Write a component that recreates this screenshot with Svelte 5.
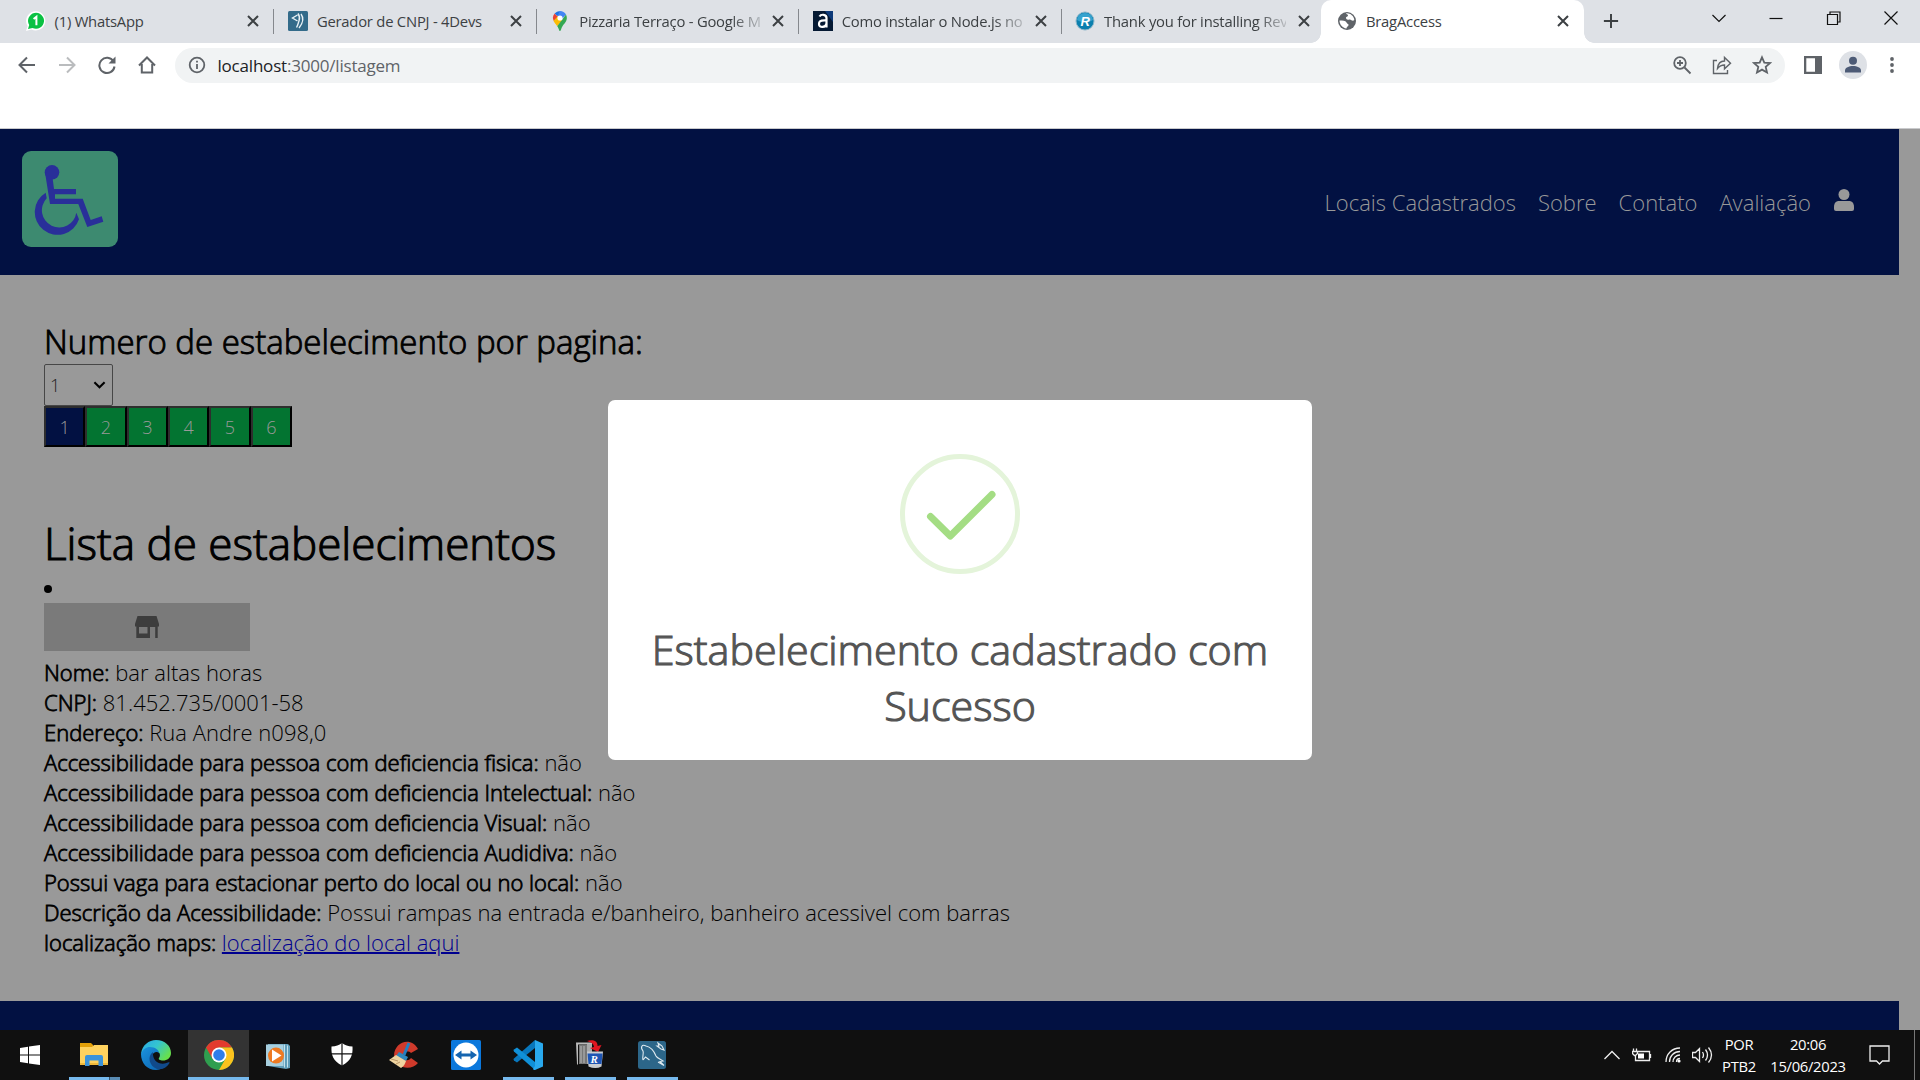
<script>
  const tabs = [
    { icon: 'whatsapp', title: '(1) WhatsApp' },
    { icon: 'devs', title: 'Gerador de CNPJ - 4Devs' },
    { icon: 'maps', title: 'Pizzaria Terraço - Google M', fade: true },
    { icon: 'alura', title: 'Como instalar o Node.js no', fade: true },
    { icon: 'revo', title: 'Thank you for installing Rev', fade: true },
    { icon: 'globe', title: 'BragAccess', active: true }
  ];
  const links = ['Locais Cadastrados', 'Sobre', 'Contato', 'Avaliação'];
  const pages = [1, 2, 3, 4, 5, 6];
  const details = [
    ['Nome:', 'bar altas horas'],
    ['CNPJ:', '81.452.735/0001-58'],
    ['Endereço:', 'Rua Andre n098,0'],
    ['Accessibilidade para pessoa com deficiencia fisica:', 'não'],
    ['Accessibilidade para pessoa com deficiencia Intelectual:', 'não'],
    ['Accessibilidade para pessoa com deficiencia Visual:', 'não'],
    ['Accessibilidade para pessoa com deficiencia Audidiva:', 'não'],
    ['Possui vaga para estacionar perto do local ou no local:', 'não'],
    ['Descrição da Acessibilidade:', 'Possui rampas na entrada e/banheiro, banheiro acessivel com barras']
  ];
  const apps = [
    { id: 'explorer', state: 'stacked' },
    { id: 'edge' },
    { id: 'chrome', state: 'current' },
    { id: 'media' },
    { id: 'shield' },
    { id: 'ccleaner' },
    { id: 'teamviewer' },
    { id: 'vscode', state: 'open' },
    { id: 'revo', state: 'open' },
    { id: 'mysql', state: 'open' }
  ];
</script>

<div class="screen">
  <header class="tabstrip">
    {#each tabs as tab}
      <div class="tab" class:active={tab.active}>
        <svg class="favicon" viewBox="0 0 20 20">
          {#if tab.icon === 'whatsapp'}
            <path d="M0 20l1.6-5A9.6 9.6 0 1 1 5.5 18.500z" fill="#fff" />
            <path d="M2 18l1.200-4A8 8 0 1 1 6.500 17z" fill="#0ac143" />
            <path d="M7.600 8l2.800-2.200v8.400" fill="none" stroke="#fff" stroke-width="2" />
          {:else if tab.icon === 'devs'}
            <rect width="20" height="20" rx="1.500" fill="#336b8a" />
            <path d="M9.500 4L4.500 7l5 3M10 2.500c2 3 2 5 1 7.500s-1 4-2.500 6.500M13 3c3 4 2 9-2 14" fill="none" stroke="#e8f1f5" stroke-width="1.400" />
          {:else if tab.icon === 'maps'}
            <path d="M4.600 2.500A7 7 0 0 0 4 10.500l4-4.700z" fill="#ea4335" />
            <path d="M10 0a7 7 0 0 1 6 3.500L12 8 7 4z" fill="#4285f4" />
            <path d="M10 0a7 7 0 0 0-5.400 2.500L7.600 5z" fill="#1a73e8" />
            <path d="M3.600 9.800c.8 2 2.200 3.400 3.600 5.400L12.500 9 8 5z" fill="#fbbc04" />
            <path d="M16 3.500c2.600 5.500-1.300 8.500-3.400 11.500C11 17.500 11 20 10 20s-1-2.500-2.800-4.800z" fill="#34a853" />
            <circle cx="10" cy="7" r="2.600" fill="#fff" />
          {:else if tab.icon === 'alura'}
            <rect width="20" height="20" fill="#051933" />
            <path d="M12 0h8v11z" fill="#0d3a7a" />
            <path d="M6.500 5.500C8 3 13.500 3 13.500 7v9.500M13.500 9.500C6 9 6 11 6 13c0 4.500 7 3.500 7.500-.5" fill="none" stroke="#fff" stroke-width="2.200" />
          {:else if tab.icon === 'revo'}
            <circle cx="10" cy="10" r="9" fill="#0b7fae" stroke="#8bb5c9" />
            <path d="M2 9a8 7 0 0 1 16 0c-5 3-11 3-16 0z" fill="#35a2ce" />
            <text x="5.500" y="14.600" class="r-mark">R</text>
          {:else}
            <circle cx="10" cy="10" r="9" fill="#5f6368" />
            <path d="M9 2.500C12 1.500 17 4.500 17.300 9c-2 2-3-1-5-.5s-3 0-3.300-1.500 2-1 2-2.500S9 3.500 9 2.500zM2.500 9.500c3 0 6 0 7 2s2 1 2 2.500-2 1.500-2 3.500c-4-.5-7-4-7-8z" fill="#fff" />
          {/if}
        </svg>
        <span class="tab-title" class:fade={tab.fade}>{tab.title}</span>
        <svg class="tab-close" viewBox="0 0 16 16"><path d="M3 3l10 10M13 3L3 13" /></svg>
      </div>
    {/each}
    <svg class="new-tab" viewBox="0 0 18 18"><path d="M9 1v16M1 9h16" /></svg>
    <div class="window-buttons">
      <svg viewBox="0 0 16 16"><path d="M1.500 5L8 11.500 14.500 5" /></svg>
      <svg viewBox="0 0 16 16"><path d="M1.500 8.500h13" /></svg>
      <svg viewBox="0 0 16 16"><path d="M1.500 4.500h10v10h-10zM4 4.500v-2.500h10v10h-2.500" /></svg>
      <svg viewBox="0 0 16 16"><path d="M1.500 1.500l13 13M14.500 1.500l-13 13" /></svg>
    </div>
  </header>

  <div class="toolbar">
    <svg class="tool" viewBox="0 0 20 20"><path d="M18 10H3M10 2.500L2.500 10l7.500 7.500" /></svg>
    <svg class="tool faded" viewBox="0 0 20 20"><path d="M2 10h15M10 2.500l7.500 7.500-7.500 7.500" /></svg>
    <svg class="tool" viewBox="0 0 20 20"><path d="M16.500 6.500A7.600 7.600 0 1 0 17.500 11.500" /><path d="M18.500 1.500v7h-7z" class="solid" /></svg>
    <svg class="tool" viewBox="0 0 20 20"><path d="M2 10.500l8-8 8 8M4.800 9v8.500h10.400V9" /></svg>
    <div class="address">
      <svg class="info" viewBox="0 0 18 18"><circle cx="9" cy="9" r="7.300" /><path d="M9 8v5M9 4.800v1.700" /></svg>
      <span class="url"><b>localhost</b>:3000/listagem</span>
      <div class="address-actions">
        <svg viewBox="0 0 20 20"><circle cx="8" cy="8" r="5.800" /><path d="M12.500 12.500l6 6M8 5v6M5 8h6" /></svg>
        <svg viewBox="0 0 20 20" class="fine"><path d="M5 5.500H1.500v13h14V15M5.500 13.500c.5-5 3.500-7.500 7-7.500V2.500l6 5.700-6 5.600V10c-3 0-5 1-7 3.500z" /></svg>
        <svg viewBox="0 0 20 20"><path d="M10 2.300l2.300 5.300 5.700.5-4.300 3.800 1.300 5.600L10 14.600l-5 2.900 1.300-5.600L2 8.100l5.700-.5z" /></svg>
      </div>
    </div>
    <svg class="side-panel" viewBox="0 0 18 18"><path d="M0 0h18v18H0zM2.300 2.300v13.400h8.700V2.300z" fill-rule="evenodd" /></svg>
    <svg class="profile" viewBox="0 0 28 28"><circle cx="14" cy="14" r="14" fill="#dee1e6" /><circle cx="14" cy="9.800" r="4" fill="#4d5b76" /><path d="M6 21.500v-2c0-3 4-4.500 8-4.500s8 1.500 8 4.500v2z" fill="#4d5b76" /></svg>
    <svg class="dots" viewBox="0 0 4 18"><circle cx="2" cy="3" r="1.900" /><circle cx="2" cy="9" r="1.900" /><circle cx="2" cy="15" r="1.900" /></svg>
  </div>

  <div class="viewport">
    <nav class="navbar">
      <svg class="logo" viewBox="0 0 96 96">
        <rect width="96" height="96" rx="9" fill="#3d8a70" />
        <g fill="#292f99">
          <circle cx="30" cy="21.300" r="7.300" />
          <path d="M22.900 20.700L28 53h28.300l9 23 16-5.300-1.600-5.400-11 3.700-8-21.300H33v-4.400h21V38H32l-1.300-10z" />
          <path d="M23.700 41.700A22.700 22.700 0 1 0 57 68.300l-2.700-6.600A17.300 17.300 0 1 1 24.700 47.200z" />
        </g>
      </svg>
      <div class="links">
        {#each links as link}<span>{link}</span>{/each}
        <svg class="user" viewBox="0 0 20 22"><circle cx="10" cy="5.500" r="5.500" /><path d="M0 18c0-4 2-6 5-6h10c3 0 5 2 5 6v2q0 2-2 2H2q-2 0-2-2z" /></svg>
      </div>
    </nav>

    <main>
      <h2>Numero de estabelecimento por pagina:</h2>
      <div class="select"><span>1</span><svg viewBox="0 0 14 10"><path d="M1.500 2L7 7.500 12.500 2" /></svg></div>
      <div class="pages">
        {#each pages as page}<div class="page" class:chosen={page === 1}>{page}</div>{/each}
      </div>
      <h1>Lista de estabelecimentos</h1>
      <div class="bullet"></div>
      <div class="store">
        <svg viewBox="0 0 24 22"><path d="M2.500 0h19l2.500 8v2.500h-1.300V22h-2.500V11H15v11H1.300V10.500H0V8zM4 11v6.500h8.500V11z" fill-rule="evenodd" /></svg>
      </div>
      <div class="details">
        {#each details as [label, value]}
          <p><strong>{label}</strong> {value}</p>
        {/each}
        <p><strong>localização maps:</strong> <u>localização do local aqui</u></p>
      </div>
    </main>
    <div class="page-footer"></div>

    <section class="modal">
      <svg class="success" viewBox="0 0 120 120">
        <circle cx="60" cy="60" r="57.500" fill="none" stroke="#e4f4da" stroke-width="5" />
        <path d="M30.500 62.500L50.300 82 92 40.500" fill="none" stroke="#a4dd84" stroke-width="7" stroke-linecap="round" stroke-linejoin="round" />
      </svg>
      <div class="message">Estabelecimento cadastrado com<br />Sucesso</div>
    </section>
  </div>

  <footer class="taskbar">
    <div class="start"><svg viewBox="0 0 20 20"><path d="M0 3l8-1.200v7.700H0zM9 1.600L20 0v9.500H9zM0 10.500h8v7.700L0 17zM9 10.500h11V20L9 18.400z" fill="#fff" /></svg></div>
    {#each apps as app}
      <div class="app {app.state ?? ''}">
        <svg viewBox="0 0 30 30">
          {#if app.id === 'explorer'}
            <path d="M1 3h11l2 2v5H1z" fill="#e3a008" />
            <path d="M1 7h12l2-2h14v20H1z" fill="#ffd25e" />
            <path d="M1 23h28v2H1z" fill="#f0b93a" />
            <path d="M6 26V17q0-2 2-2h14q2 0 2 2v9h-4.500v-5.500h-9V26z" fill="#3b93da" />
          {:else if app.id === 'edge'}
            <defs>
              <linearGradient id="edge-top" x1="0" y1="0" x2="1" y2=".6"><stop offset="0" stop-color="#2aa6e8" /><stop offset=".5" stop-color="#34c5d0" /><stop offset="1" stop-color="#67e04c" /></linearGradient>
              <linearGradient id="edge-low" x1="0" y1="0" x2="1" y2="1"><stop offset="0" stop-color="#1b93de" /><stop offset="1" stop-color="#0b61ae" /></linearGradient>
            </defs>
            <path d="M0 14C1 5 8 0 15 0c9 0 15 6 15 13 0 5-4 7.500-8 7.500-3 0-5-1-4-2.500 2-2.500 1-7-4-7C9 11 5 10 0 14z" fill="url(#edge-top)" />
            <path d="M0 14c2-5 5-7 9-7 5 0 9 3 9 6-2-2-6-1-7 3-1 7 5 13 12 11.800C20 29 18 30 15 30 6 30 0 23 0 14z" fill="url(#edge-low)" />
            <path d="M12 12c-6 4-4 14 4 17 6 1 10-2 12.500-6 .3-.8-.4-1-1-.7C20 26 11 22 12 12z" fill="#114a8b" />
          {:else if app.id === 'chrome'}
            <circle cx="15" cy="15" r="15" fill="#2f9e4f" />
            <path d="M2 7.500A15 15 0 0 1 28 7.500H15L8.500 18.800z" fill="#e33b2e" />
            <path d="M28 7.500A15 15 0 0 1 15 30l6.500-11.200L15 7.500z" fill="#fcc31e" />
            <circle cx="15" cy="15" r="7.500" fill="#fff" /><circle cx="15" cy="15" r="5.800" fill="#2f7de9" />
          {:else if app.id === 'media'}
            <path d="M3 4h20l2 2v22l-4 1-18-3z" fill="#5f9db9" />
            <path d="M1 4.500h17.500V26H1z" fill="#a7cfdf" /><path d="M19.500 4.500v23M22.500 5.500v22" stroke="#c4e1eb" />
            <circle cx="11" cy="15.600" r="8" fill="#ee7a22" /><path d="M7 9.500l9.500 6-9.500 6z" fill="#fff" />
          {:else if app.id === 'shield'}
            <path d="M15 3c3 2.500 6 3.300 10.500 3.500C26 15 24 21 15 25.500 6 21 4 15 4.500 6.500 9 6.300 12 5.500 15 3z" fill="#fff" />
            <path d="M15 3v23M4 13.800h22" stroke="#111" stroke-width="1.200" />
          {:else if app.id === 'ccleaner'}
            <path d="M29 9L22 13c-3-3-8-1-8 3s5 6 8 2l7 5c-6 8-23 6-24-7C5 2 22-4 29 9z" fill="#cf3a2b" />
            <path d="M20 3L15 15" stroke="#237ec1" stroke-width="3" />
            <path d="M10 12l9 5-2 4-10-5z" fill="#3088bd" /><path d="M7 15l10 6c-1 3-2 5-5 7L0 20z" fill="#efd4a0" /><path d="M2 19l7 2M7 24l4-2" stroke="#b89565" />
          {:else if app.id === 'teamviewer'}
            <rect width="30" height="30" rx="1.500" fill="#0b78dc" /><circle cx="15" cy="15" r="12.500" fill="#fff" />
            <path d="M4 15l6.500-4.500v3h9v-3L26 15l-6.500 4.500v-3h-9v3z" fill="#1565b0" />
          {:else if app.id === 'vscode'}
            <path d="M22 0v8L4 22.500 1 20.500q-1-1 0-2z" fill="#0877bd" />
            <path d="M22 30v-8L4 7.500 1 9.500q-1 1 0 2z" fill="#1090d8" />
            <path d="M22 0l8 3.500v23L22 30q-1 .3-2-1l2-3z" fill="#29a9ee" />
          {:else if app.id === 'revo'}
            <path d="M1 2.500h16v2H3v20H2z" fill="#bbb" /><path d="M4 5h8v19H4z" fill="#777" /><path d="M12 4h5v20h-5z" fill="#aaa" /><path d="M6 6v17M9 6v17" stroke="#bbb" />
            <path d="M12 1c6-2 11 0 10.500 5l4-1L23 12l-8-4 4-1c0-3-3-5-7-6z" fill="#e01520" />
            <path d="M12 11.500h16l-1.500 15q-6 3-13 0z" fill="#c8ccd1" /><path d="M12.500 13.500h15l-1 10.500h-13z" fill="#1e55b4" />
            <text x="15.500" y="23" class="r-app">R</text>
          {:else}
            <rect x="1" y="1" width="28" height="28" rx="2.500" fill="#2c6689" />
            <path d="M6 20C5 16 7 14 6 11 3 7 5 4 9 6c5 1 8 5 10 10 1 2 4 3 7 5l-3 .5 4 4-6-3.500M6 20l2.500-3 4 3M21 3l1 3h-2l4 3 3 1-2-4z" fill="none" stroke="#dfeaf0" stroke-width="1.100" />
          {/if}
        </svg>
      </div>
    {/each}
    <div class="tray">
      <svg class="up" viewBox="0 0 16 10"><path d="M.5 9L8 1.500 15.500 9" /></svg>
      <svg class="battery" viewBox="0 0 20 14"><path d="M5.500 3.500h12v9H3.500v-5M18.500 6v4M1.500.5v3M4.500.5v3M.5 3.500h5v2l-2 2h-1l-2-2z" /><path d="M6 5.500h6v5H6z" class="fill" /></svg>
      <svg class="wifi" viewBox="0 0 16 16"><path d="M1 15C1 7 7 1 15 1M4.500 15C4.500 9 9 4.500 15 4.500M8 15c0-4 3-7 7-7M11.500 15c0-2 1.500-3.500 3.500-3.500" /><circle cx="14" cy="14" r="1.600" class="fill" /></svg>
      <svg class="sound" viewBox="0 0 21 18"><path d="M.5 6.500h3l4-4v13l-4-4h-3zM10.500 6q2 3 0 6M13.500 3.500q4 5.500 0 11M16.500 1.500q6 7.500 0 15" /></svg>
      <div class="stamp lang"><span>POR</span><span>PTB2</span></div>
      <div class="stamp clock"><span>20:06</span><span>15/06/2023</span></div>
      <svg class="notice" viewBox="0 0 21 20"><path d="M1 1h19v15h-6.500l-3 3-3-3H1z" /></svg>
      <div class="peek"></div>
    </div>
  </footer>
</div>

<style>
  :global(body) { margin: 0; overflow: hidden; }
  svg { display: block; flex: none; }
  .screen { width: 1920px; height: 1080px; display: flex; flex-direction: column; overflow: hidden; background: #fff; font-family: 'Open Sans', 'Noto Sans', sans-serif; }

  .tabstrip { height: 43px; flex: none; display: flex; padding-left: 11px; background: #dee1e6; font-size: 14.800px; color: #3c4043; }
  .tab { position: relative; box-sizing: border-box; width: 262.400px; height: 43px; display: flex; align-items: center; padding: 0 12px 2px 14.500px; flex: none; }
  .tab + .tab:not(.active)::before { content: ''; position: absolute; left: 0; top: 9px; width: 1px; height: 25px; background: #85888d; }
  .tab.active { width: 263px; margin-left: -2px; padding-left: 16px; background: #fff; border-radius: 10px 10px 0 0; }
  .tab.active::before, .tab.active::after { content: ''; position: absolute; bottom: 0; width: 10px; height: 10px; }
  .tab.active::before { left: -10px; background: radial-gradient(circle at 0 0, transparent 9.500px, #fff 10px); }
  .tab.active::after { right: -10px; background: radial-gradient(circle at 100% 0, transparent 9.500px, #fff 10px); }
  .favicon { width: 20px; height: 20px; }
  .tab-title { width: 182px; margin-left: 9px; white-space: nowrap; letter-spacing: -.22px; }
  .fade { -webkit-mask-image: linear-gradient(90deg, #000 152px, transparent 190px); mask-image: linear-gradient(90deg, #000 152px, transparent 190px); }
  .tab-close { width: 16px; height: 16px; margin-left: 9.500px; stroke: #3c4043; stroke-width: 2; }
  .active .tab-close { margin-left: 7.500px; }
  .new-tab { width: 16px; height: 16px; margin: 13px 0 0 19px; stroke: #3c4043; stroke-width: 2.200; }
  .window-buttons { display: flex; gap: 41.500px; margin: 10px 21px 0 auto; }
  .window-buttons svg { width: 16px; height: 16px; fill: none; stroke: #111; stroke-width: 1.200; }
  .r-mark { font: italic bold 13px 'Liberation Sans', sans-serif; fill: #fff; }

  .toolbar { height: 45px; padding: 0 26px 0 17px; flex: none; display: flex; align-items: center; box-sizing: border-box; }
  .toolbar > svg { margin-bottom: 1px; }
  .tool { width: 20px; height: 20px; margin-right: 20px; fill: none; stroke: #5f6368; stroke-width: 2; }
  .tool .solid { fill: #5f6368; stroke: none; }
  .tool.faded { stroke: #babcbe; }
  .address { height: 35px; width: 1610px; margin-left: -2px; box-sizing: border-box; border-radius: 18px; background: #f1f3f4; display: flex; align-items: center; padding: 0 13px 1px 13px; }
  .info { width: 18px; height: 18px; fill: none; stroke: #5f6368; stroke-width: 1.800; }
  .url { margin-left: 11.500px; font-size: 17px; letter-spacing: -.2px; color: #5f6368; }
  .url b { font-weight: 400; color: #202124; }
  .address-actions { display: flex; gap: 20px; margin-left: auto; }
  .address-actions svg { width: 20px; height: 20px; fill: none; stroke: #5f6368; stroke-width: 1.800; }
  .address-actions .fine { stroke-width: 1.400; }
  .side-panel { width: 18px; height: 18px; margin-left: 19px; fill: #5f6368; }
  .profile { width: 28px; height: 28px; margin-left: 17px; }
  .dots { width: 4px; height: 18px; margin-left: 23px; fill: #5f6368; }

  .viewport { position: relative; height: 901px; margin-top: 40px; border-top: 1px solid #c9cacc; background: #999; display: flex; flex-direction: column; font-weight: 300; flex: none; }
  .navbar { width: 1899px; height: 146px; box-sizing: border-box; background: #021142; display: flex; justify-content: space-between; padding: 22px 45px 0 22px; }
  .logo { width: 96px; height: 96px; }
  .links { display: flex; gap: 22px; height: 32px; margin-top: 35px; color: #999; font-size: 22px; line-height: 32px; }
  .user { width: 20px; height: 22px; margin: 3px 0 0 1px; fill: #999; }

  main { padding: 45px 44px 0; color: #000; }
  h2, h1, p { margin: 0; font-weight: 300; white-space: nowrap; }
  h2 { height: 44px; font-size: 33px; line-height: 43px; -webkit-text-stroke: .9px #000; }
  .select { width: 69px; height: 42px; box-sizing: border-box; border: 1px solid #474747; border-radius: 2px; display: flex; justify-content: space-between; align-items: center; padding: 0 6px 0 5px; font-size: 18px; color: #222; }
  .select svg { width: 13px; height: 10px; fill: none; stroke: #000; stroke-width: 2.200; }
  .pages { display: flex; width: 248px; height: 41px; }
  .page { flex: 1; box-sizing: border-box; height: 41px; border: 2px solid; border-color: #2e2e2e #000 #000 #2e2e2e; background: #037431; color: #999; font-size: 18px; line-height: 38px; text-align: center; }
  .chosen { background: #021142; }
  h1 { margin-top: 66px; height: 61px; font-size: 44px; line-height: 60px; -webkit-text-stroke: 1.100px #000; }
  .bullet { width: 8px; height: 8px; margin-top: 11px; border-radius: 50%; background: #000; }
  .store { width: 206px; height: 48px; margin-top: 10px; background: #7a7a7a; display: flex; align-items: center; justify-content: center; }
  .store svg { width: 24px; height: 22px; fill: #3d3d3d; }
  .details { margin-top: 6px; font-size: 22px; }
  .details p { height: 30px; line-height: 30px; }
  strong { font-weight: 300; -webkit-text-stroke: .8px #000; }
  u { color: #00008f; text-decoration-thickness: 2px; }
  .page-footer { width: 1899px; margin-top: auto; background: #021142; flex: 0 0 29px; }

  .modal { position: absolute; left: 608px; top: 271px; width: 704px; height: 360px; border-radius: 7px; background: #fff; display: flex; flex-direction: column; align-items: center; }
  .success { width: 120px; height: 120px; margin-top: 54px; }
  .message { margin-top: 47px; font-size: 41.250px; line-height: 56px; color: #545454; text-align: center; white-space: nowrap; -webkit-text-stroke: 1.100px #545454; }

  .taskbar { height: 50px; flex: none; display: flex; background: #101010; }
  .start { width: 63px; display: flex; align-items: center; padding-left: 20px; box-sizing: border-box; }
  .start svg { width: 20px; height: 20px; }
  .app { position: relative; width: 62px; display: flex; align-items: center; justify-content: center; }
  .app svg { width: 30px; height: 30px; }
  .app.current { background: #333; width: 61px; margin-left: 1px; }
  .app.open::after, .app.stacked::after, .app.current::after { content: ''; position: absolute; left: 6px; bottom: 0; width: 51px; height: 3px; background: #76b9ed; }
  .app.current::after { left: 0; width: 61px; }
  .app.stacked::after { background: linear-gradient(90deg, #76b9ed 40px, #37546c 40px, #37546c 41px, #5a8cb4 41px); }
  .r-app { font: italic bold 11px 'Liberation Serif', serif; fill: #fff; }
  .tray { display: flex; align-items: center; margin-left: auto; }
  .tray svg { fill: none; stroke: #eee; stroke-width: 1.300; }
  .tray .fill { fill: #fff; stroke: none; }
  .up { width: 16px; height: 10px; margin-right: 12px; }
  .battery { width: 20px; height: 14px; margin-right: 13px; }
  .wifi { width: 16px; height: 16px; margin-right: 11px; }
  .sound { width: 21px; height: 18px; margin-right: 6px; }
  .stamp { display: flex; flex-direction: column; align-items: center; color: #fff; font-size: 14.800px; line-height: 22px; white-space: nowrap; letter-spacing: -.3px; }
  .lang { width: 40px; margin-right: 8px; }
  .clock { width: 82px; margin-right: 20px; }
  .notice { width: 21px; height: 20px; margin-right: 24px; }
  .peek { width: 1px; height: 50px; margin-right: 5px; background: #777; }
</style>
